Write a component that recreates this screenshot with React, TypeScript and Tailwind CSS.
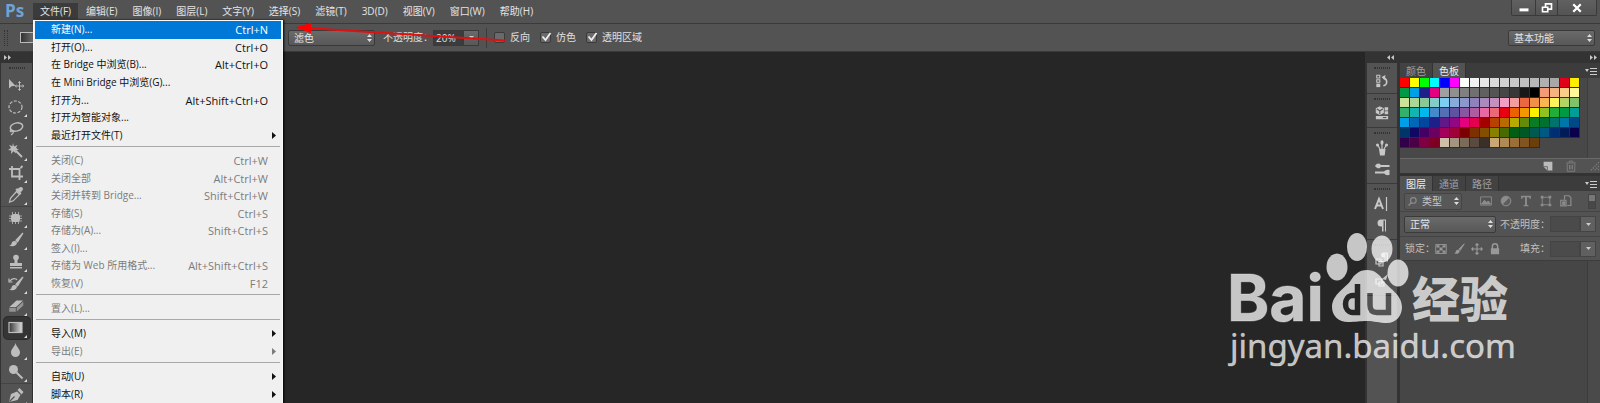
import type { ReactNode } from 'react';

interface MenuEntry {
  label: string;
  keys?: string;
  off?: boolean;
  sub?: boolean;
  active?: boolean;
}

const MENUS = ['文件(F)', '编辑(E)', '图像(I)', '图层(L)', '文字(Y)', '选择(S)', '滤镜(T)', '3D(D)', '视图(V)', '窗口(W)', '帮助(H)'];

const GROUP_OPEN: MenuEntry[] = [
  { label: '新建(N)...', keys: 'Ctrl+N', active: true },
  { label: '打开(O)...', keys: 'Ctrl+O' },
  { label: '在 Bridge 中浏览(B)...', keys: 'Alt+Ctrl+O' },
  { label: '在 Mini Bridge 中浏览(G)...' },
  { label: '打开为...', keys: 'Alt+Shift+Ctrl+O' },
  { label: '打开为智能对象...' },
  { label: '最近打开文件(T)', sub: true },
];

const GROUP_SAVE: MenuEntry[] = [
  { label: '关闭(C)', keys: 'Ctrl+W', off: true },
  { label: '关闭全部', keys: 'Alt+Ctrl+W', off: true },
  { label: '关闭并转到 Bridge...', keys: 'Shift+Ctrl+W', off: true },
  { label: '存储(S)', keys: 'Ctrl+S', off: true },
  { label: '存储为(A)...', keys: 'Shift+Ctrl+S', off: true },
  { label: '签入(I)...', off: true },
  { label: '存储为 Web 所用格式...', keys: 'Alt+Shift+Ctrl+S', off: true },
  { label: '恢复(V)', keys: 'F12', off: true },
];

const GROUP_PLACE: MenuEntry[] = [{ label: '置入(L)...', off: true }];

const GROUP_IMPORT: MenuEntry[] = [
  { label: '导入(M)', sub: true },
  { label: '导出(E)', sub: true, off: true },
];

const GROUP_AUTO: MenuEntry[] = [
  { label: '自动(U)', sub: true },
  { label: '脚本(R)', sub: true },
];

const SWATCHES = [
  '#ff0000 #ffff00 #00ff00 #00ffff #0000ff #ff00ff #ffffff #f2f2f2 #e6e6e6 #dadada #d0d0d0 #c8c8c8 #c0c0c0 #b8b8b8 #b0b0b0 #a8a8a8 #e1001a #ffee00',
  '#009944 #00a0e9 #1d2088 #e4007f #a0a0a0 #909090 #808080 #707070 #606060 #545454 #464646 #383838 #181818 #000000 #f29b76 #f6b37f #facd89 #fff799',
  '#cce198 #acd598 #89c997 #84ccc9 #7ecef4 #88abda #8c97cb #8f82bc #aa89bd #c490bf #f19ec2 #f29c9f #eb6841 #f19149 #f8b551 #fff45c #b3d465 #80c269',
  '#32b16c #13b5b1 #00b7ee #448aca #556fb5 #5f52a0 #8957a1 #ae5da1 #ea68a2 #eb6877 #e60012 #eb6100 #f39800 #fff100 #8fc31f #22ac38 #009944 #009e96',
  '#00a0e9 #0068b7 #00479d #1d2088 #601986 #920783 #e4007f #e5004f #a40000 #b84100 #b86b00 #b7aa00 #638c0b #097c25 #007130 #00736d #0075a9 #004986',
  '#003567 #100964 #440062 #6a005f #a4005b #a0003a #7d0000 #7d3000 #834e00 #8a8000 #486a00 #005e15 #005826 #005a52 #005982 #002e73 #001c58 #0a004c',
  '#32004b #4b0046 #7e0043 #7d0022 #cfbfa8 #a59480 #7d6b5a #5a4a40 #3a302a #c9a876 #b08a55 #9b7038 #825520 #6b3e0c',
].map((row) => row.split(' '));

const text = "font-['Open_Sans','Noto_Sans_CJK_SC',sans-serif]";
const well = 'border border-[#3a3a3a] bg-gradient-to-b from-[#6a6a6a] to-[#585858] text-[#e6e6e6]';

function Icon({ children, size = 'size-4' }: { children: ReactNode; size?: string }) {
  return (
    <svg viewBox="0 0 16 16" className={`${size} shrink-0`} fill="none" stroke="currentColor" strokeWidth="1.2" aria-hidden="true">
      {children}
    </svg>
  );
}

function Brush() {
  return (
    <>
      <path d="M15 1 8 8.2l1.6 1.6z" fill="currentColor" />
      <path d="M8.400 9.500C6 8 3.800 9.500 3.600 11.500 3.300 13 2 13.500 1 13.600c3 1.400 8 .6 7.900-3.100z" fill="currentColor" stroke="none" />
    </>
  );
}

const TOOLS: { name: string; art: ReactNode; gap?: boolean; plain?: boolean; on?: boolean }[] = [
  {
    name: '移动工具', plain: true,
    art: <><path d="M1 2v9.500l2.500-2.300 4-.5z" fill="currentColor" stroke="none" /><path d="M11.500 5v8M7.500 9h8M10.300 6l1.200-1.500L12.700 6M10.300 12l1.200 1.500 1.200-1.500M8.500 7.800 7.200 9l1.300 1.200M14.500 7.800 15.800 9l-1.300 1.200" strokeWidth="1" /></>,
  },
  { name: '椭圆选框工具', art: <ellipse cx="7.500" cy="8" rx="6.500" ry="6" strokeDasharray="3 1.500" /> },
  { name: '套索工具', art: <><ellipse cx="8.500" cy="6" rx="6.300" ry="4" transform="rotate(-14 8.500 6)" strokeWidth="1.500" /><path d="M3.500 8.500c-2 .5-1.500 3 .5 2s2 1.500-1 3.500" /></> },
  { name: '魔棒工具', art: <><path d="m5 0 1 3.500L9.500 2 8 5l3 1.500L7.600 7.300 8 10.500 5.500 8.300 3 11l.3-3.500L0 7l3-2L1 1.800l3.300 1.400z" fill="currentColor" stroke="none" /><path d="m7.500 7.500 6.500 6.500" strokeWidth="2" /></> },
  { name: '裁剪工具', art: <path d="M4 1v10.500h11M1 4h10.500v11M12.500 3l2-2" strokeWidth="1.800" /> },
  { name: '吸管工具', art: <><path d="m10 1.500 2-1.300c2-.8 3.500 1 2.800 2.800l-2.300 2.500 1 1-1.200 1.200-5-5 1.200-1.200z" fill="currentColor" stroke="none" /><path d="m8.500 4.500 3 3-6.300 6.300-3.700 1.300 1-3.800z" /></> },
  { name: '修补工具', gap: true, art: <><rect x="3" y="4" width="9" height="8" rx="3" fill="currentColor" stroke="none" /><path d="M4.500 2v12M7.500 2v12M10.500 2v12M1 6h13M1 8.500h13M1 11h13" strokeWidth="1" strokeOpacity=".8" /></> },
  { name: '画笔工具', art: <Brush /> },
  { name: '仿制图章工具', art: <><circle cx="8" cy="3.500" r="2.800" fill="currentColor" stroke="none" /><path d="M6.500 5h3v4H14v3H2V9h4.500zM2 13h12v1.500H2z" fill="currentColor" stroke="none" /></> },
  { name: '历史记录画笔工具', art: <><Brush /><path d="M1 2.500v3.500h3.500M2 5c2-3 6-3 7-1" /></> },
  { name: '橡皮擦工具', art: <><path d="M8.500 2.500H15L8 9H1.500z" fill="currentColor" stroke="none" /><path d="M1.200 9.800h6.600v4H1.200zM8.800 9.400 15.300 3.500v4l-6.500 6z" fill="currentColor" fillOpacity=".6" stroke="none" /></> },
  {
    name: '渐变工具', on: true,
    art: <><defs><linearGradient id="tool-ramp"><stop stopColor="#333" /><stop offset="1" stopColor="#ddd" /></linearGradient></defs><rect x="1" y="2.500" width="13" height="10" fill="url(#tool-ramp)" /></>,
  },
  { name: '模糊工具', art: <path d="M7.500 1C6.500 5 3 7 3 10.500a4.500 4.500 0 0 0 9 0C12 7 8.500 5 7.500 1z" fill="currentColor" stroke="none" /> },
  { name: '减淡工具', art: <><circle cx="5.500" cy="5.500" r="4.500" fill="currentColor" stroke="none" /><path d="m8.500 8.500 6 6" strokeWidth="2" /></> },
  { name: '钢笔工具', gap: true, art: <><path d="M1 15 3 7l6-2.500L12.500 8 9.500 13z" fill="currentColor" stroke="none" /><path d="m9.500 3 2-2L15.500 5l-2 2.500z" fill="currentColor" stroke="none" /><path d="m1.500 14.500 5-5" stroke="#535353" /></> },
];

function ToolBar() {
  return (
    <aside className="w-[33px] shrink-0 border-x border-[#333] bg-[#535353] text-[#bdbdbd]">
      <div className="flex h-[11px] items-center bg-[#333] pl-[3px]">
        <Arrows />
      </div>
      <Grip />
      <div className="flex flex-col items-center pt-[5px]">
        {TOOLS.map((t) => (
          <div key={t.name} className={t.gap ? 'w-full border-t border-[#444]' : 'w-full'}>
            <button
              aria-label={t.name}
              className={`relative mx-auto flex h-[22px] w-[26px] items-center justify-center rounded-sm pr-[2px] ${t.on ? 'bg-[#353535] ring-1 ring-[#2b2b2b]' : ''}`}
            >
              <Icon>{t.art}</Icon>
              {!t.plain && (
                <svg viewBox="0 0 3 3" className="absolute right-[3px] bottom-px size-[3px]" fill="#ddd" aria-hidden="true">
                  <path d="M3 0v3H0z" />
                </svg>
              )}
            </button>
          </div>
        ))}
      </div>
    </aside>
  );
}

function Arrows({ left = false }: { left?: boolean }) {
  return (
    <svg viewBox="0 0 7 5" className="h-[5px] w-[7px]" fill="#c8c8c8" aria-hidden="true">
      {left ? <path d="M3 0v5L0 2.500zM7 0v5L4 2.500z" /> : <path d="M0 0v5l3-2.500zM4 0v5l3-2.500z" />}
    </svg>
  );
}

function Grip() {
  return <div className="mx-auto mt-1 h-[2px] w-4 border-y border-dotted border-[#333]" />;
}

function Updown() {
  return (
    <svg viewBox="0 0 5 8" className="pointer-events-none absolute top-1/2 right-[3px] h-2 w-[5px] -translate-y-1/2" fill="#ddd" aria-hidden="true">
      <path d="M0 3 2.500 0 5 3zM0 5h5L2.500 8z" />
    </svg>
  );
}

function Picker({ label, value, className }: { label: string; value: string; className: string }) {
  return (
    <span className={`relative flex ${className}`}>
      <select aria-label={label} className={`h-full w-full appearance-none rounded-xs pl-[5px] text-[10px] ${well}`}>
        <option>{value}</option>
      </select>
      <Updown />
    </span>
  );
}

function MenuBar() {
  return (
    <header className="flex h-6 items-start border-b border-[#3a3a3a] bg-[#535353]">
      <div className="w-[33px] pl-[5px] text-[17px] leading-[21px] font-bold text-[#6fa3d3]">Ps</div>
      <nav className="flex gap-px">
        {MENUS.map((m, i) => (
          <button key={m} className={`mt-[3px] h-4 px-[7px] text-[10px] leading-4 text-[#e4e4e4] ${i === 0 ? 'bg-[#3b3b3b]' : ''}`}>
            {m}
          </button>
        ))}
      </nav>
      <div className="mr-[3px] ml-auto flex h-4 divide-x divide-[#3a3a3a] rounded-b-xs border border-t-0 border-[#3a3a3a] bg-gradient-to-b from-[#606060] to-[#545454] text-white">
        <button aria-label="最小化" className="flex w-6 items-center justify-center">
          <Icon size="size-3"><path d="M2 10.500h12" strokeWidth="4" /></Icon>
        </button>
        <button aria-label="还原" className="flex w-[22px] items-center justify-center">
          <Icon size="size-3"><path d="M2 7h7v6H2zM6 6V2.500h8v7h-4" strokeWidth="2.200" /></Icon>
        </button>
        <button aria-label="关闭" className="flex w-[38px] items-center justify-center">
          <Icon size="size-3"><path d="m3 3 10 10M13 3 3 13" strokeWidth="3" /></Icon>
        </button>
      </div>
    </header>
  );
}

function Tick({ label, checked = false }: { label: string; checked?: boolean }) {
  return (
    <label className="flex items-center gap-[5px]">
      <span className="relative flex">
        <input type="checkbox" defaultChecked={checked} className="peer size-[11px] appearance-none rounded-xs border border-[#3a3a3a] bg-[#6a6a6a]" />
        <svg viewBox="0 0 12 12" className="pointer-events-none absolute -top-px left-0 hidden size-3 peer-checked:block" fill="none" stroke="#eee" strokeWidth="1.800" aria-hidden="true">
          <path d="m2.500 5.500 3 3.500L10.500 2" />
        </svg>
      </span>
      {label}
    </label>
  );
}

function OptionsBar() {
  return (
    <div className="flex h-[28px] items-center border-b border-[#3a3a3a] bg-[#535353] text-[10px] text-[#e0e0e0]">
      <div className="ml-1 h-4 w-1 border-x border-dotted border-[#333]" />
      <div className="ml-3 h-[11px] w-[260px] shrink-0">
        <div className="h-full w-10 border border-[#bbb] bg-gradient-to-r from-[#333] to-white" />
      </div>
      <Picker label="模式" value="滤色" className="ml-2 h-4 w-[87px]" />
      <label htmlFor="opacity" className="ml-2">不透明度：</label>
      <input id="opacity" defaultValue="20%" className="h-4 w-[30px] border border-[#3a3a3a] bg-[#3c3c3c] pl-[2px]" />
      <button aria-label="调整不透明度" className={`flex h-4 w-4 items-center justify-center ${well}`}>
        <Drop />
      </button>
      <div className="mx-[7px] h-5 w-px bg-[#3c3c3c]" />
      <div className="flex gap-[10px]">
        <Tick label="反向" />
        <Tick label="仿色" checked />
        <Tick label="透明区域" checked />
      </div>
      <Picker label="工作区" value="基本功能" className="mr-[5px] ml-auto h-4 w-[87px]" />
    </div>
  );
}

function Drop() {
  return (
    <svg viewBox="0 0 5 3" className="h-[3px] w-[5px]" fill="#ccc" aria-hidden="true">
      <path d="M0 0h5L2.500 3z" />
    </svg>
  );
}

function MenuGroup({ items, className }: { items: MenuEntry[]; className: string }) {
  return (
    <div className={`grid auto-rows-fr ${className}`}>
      {items.map((it) => (
        <button
          key={it.label}
          role="menuitem"
          className={`flex items-center justify-between pr-[13px] pl-4 text-left text-[10px] leading-[17px] ${
            it.active ? 'bg-[#0078d7] text-white' : it.off ? 'text-[#7c7c7c]' : 'text-[#111]'
          }`}
        >
          <span>{it.label}</span>
          {it.keys && <span className="text-[11px]">{it.keys}</span>}
          {it.sub && (
            <svg viewBox="0 0 4 7" className="-mr-2 h-[7px] w-1" fill="currentColor" aria-hidden="true">
              <path d="M0 0v7l4-3.500z" />
            </svg>
          )}
        </button>
      ))}
    </div>
  );
}

function FileMenu() {
  const rule = <hr className="mx-px border-[#a8a8a8]" />;
  return (
    <div role="menu" className="absolute top-5 left-[33px] z-10 w-[250px] border border-[#f8f8f8] bg-[#f0f0f0] px-px shadow-[1px_0_2px_#000]">
      <MenuGroup items={GROUP_OPEN} className="h-[123px]" />
      <div className="pt-[2px] pb-[5px]">{rule}</div>
      <MenuGroup items={GROUP_SAVE} className="h-[140px]" />
      <div className="pt-[2px] pb-1">{rule}</div>
      <MenuGroup items={GROUP_PLACE} className="h-[18px]" />
      <div className="pt-[2px] pb-[5px]">{rule}</div>
      <MenuGroup items={GROUP_IMPORT} className="h-[35px]" />
      <div className="pt-[2px] pb-[5px]">{rule}</div>
      <MenuGroup items={GROUP_AUTO} className="h-[35px]" />
    </div>
  );
}

function Dock() {
  return (
    <div className="flex w-[30px] shrink-0 flex-col bg-[#535353] text-[#c8c8c8]">
      <div className="flex h-[11px] items-center justify-end bg-[#333] pr-[3px]">
        <Arrows left />
      </div>
      <DockGroup className="h-8">
        <Icon size="size-[14px]"><path d="M2 1.500h3.500v3H2zM2 6.500h3.500v3H2z" /><path d="M1.500 11h4.500v4H1.500z" fill="currentColor" stroke="none" /><path d="M9.500 13.500c5-1 5-7 1-9" strokeWidth="1.800" /><path d="M12 1 7.500 3.500 11 7z" fill="currentColor" stroke="none" /></Icon>
      </DockGroup>
      <DockGroup className="h-[35px]">
        <Icon size="size-[14px]"><path d="m5.500 1 4 2v4.500l-4 2-4-2V3z" fill="currentColor" /><path d="m2 3.500 3.500 2 3.500-2M5.500 5.500v4" stroke="#535353" /><path d="M11 1.500h4v3.500h-4zM11 6h4v3.500h-4zM1 11.500h14V15H1z" fill="currentColor" stroke="none" /><path d="M9 13.200h4" stroke="#535353" /></Icon>
      </DockGroup>
      <DockGroup className="h-[58px]">
        <Icon><path d="M5 9h6.500l-.8 6.500H6z" fill="currentColor" stroke="none" /><path d="M8 9V3M6 9 3 4M10 9l3-5" strokeWidth="1.200" /><ellipse cx="8" cy="2.500" rx="1.500" ry="2.200" fill="currentColor" stroke="none" /><circle cx="3.500" cy="5" r="1.500" fill="currentColor" stroke="none" /><circle cx="12.500" cy="5" r="1.500" fill="currentColor" stroke="none" /></Icon>
        <Icon><path d="M6 5h9.500M1 11.500h9" strokeWidth="1.800" /><path d="M1 5c2-3 4-3 5.500-1.500v3C5 8 3 7.500 1 5zM15.500 14c-3 .5-5-.5-6-2.500 1-2 3-3 6-2.500z" fill="currentColor" stroke="none" /></Icon>
      </DockGroup>
      <DockGroup className="h-[57px]">
        <Icon><path d="m1 13 4-10 4 10M2.500 9.500h5" strokeWidth="2" /><path d="M12.500 1v14" /></Icon>
        <Icon><path d="M12 2.500H7a3.500 3.500 0 0 0 0 7h1v5h1.500v-11h1.500v11h1z" fill="currentColor" stroke="none" /></Icon>
      </DockGroup>
      <DockGroup className="h-[58px]">
        <Icon><path d="M14 1.500H9.500a2.500 2.500 0 0 0 0 5h1v4h1v-8h1v8H14z" fill="currentColor" stroke="none" /><path d="M2 8h5v5H2zM5 10.500h4V15H5z" /></Icon>
        <Icon><path d="m8 6 6-5-2 6z" fill="currentColor" stroke="none" /><path d="M2 6h6v5H2zM5 9h5v4H5z" /></Icon>
      </DockGroup>
      <div className="h-[110px]" />
    </div>
  );
}

function DockGroup({ children, className }: { children: ReactNode; className: string }) {
  return (
    <div className={`flex flex-col items-center border-b border-[#3a3a3a] ${className}`}>
      <Grip />
      <div className="flex flex-1 flex-col items-center justify-evenly">{children}</div>
    </div>
  );
}

function Tabs({ names, active }: { names: string[]; active: number }) {
  return (
    <div role="tablist" className="flex h-[15px] bg-[#3c3c3c] text-[10px] leading-[14px]">
      {names.map((n, i) => (
        <button key={n} role="tab" aria-selected={i === active} className={`border-r border-[#333] px-[6px] ${i === active ? 'bg-[#535353] text-[#eee]' : 'bg-[#424242] text-[#a0a0a0]'}`}>
          {n}
        </button>
      ))}
      <button aria-label="面板菜单" className="mr-[3px] ml-auto text-[#ccc]">
        <svg viewBox="0 0 12 8" className="h-2 w-3" fill="none" stroke="currentColor" aria-hidden="true">
          <path d="M5 1.500h7M5 4.500h7M5 7.500h7" />
          <path d="M0 2h4L2 5z" fill="currentColor" stroke="none" />
        </svg>
      </button>
    </div>
  );
}

function SwatchPanel() {
  return (
    <section>
      <Tabs names={['颜色', '色板']} active={1} />
      <div className="flex h-20 bg-[#484848]">
        <div className="flex-1">
          {SWATCHES.map((row, y) => (
            <div key={y} className="flex">
              {row.map((c, x) => (
                <div key={x} className="size-[10px] border-r border-b border-[#2c2c2c]" style={{ background: c }} />
              ))}
            </div>
          ))}
        </div>
        <div className="w-[13px] border-l border-[#3e3e3e] bg-[#4c4c4c]" />
      </div>
      <div className="flex h-[15px] items-center justify-end gap-3 border-t border-[#6a6a6a] bg-[#535353] pr-px text-[#bbb]">
        <Icon size="size-[10px]"><path d="M1 1h14v14H7L1 9z" fill="currentColor" stroke="none" /><path d="M1 9h6v6" stroke="#535353" /></Icon>
        <span className="text-[#808080]"><Icon size="size-3"><path d="M1.500 4h13M5.500 3.500V1.500h5v2M3 5v10h10V5M6 6.500v6M8 6.500v6M10 6.500v6" /></Icon></span>
        <span className="text-[#808080]"><Icon size="size-[10px]"><path d="M16 2 2 16M16 8l-8 8M16 13l-3 3" strokeDasharray="2 2" strokeWidth="2" /></Icon></span>
      </div>
    </section>
  );
}

function Amount({ label }: { label: string }) {
  return (
    <div className="ml-auto flex items-center">
      <label htmlFor={label}>{label}：</label>
      <input id={label} className="h-4 w-[30px] border border-[#444] bg-[#4b4b4b]" />
      <button aria-label={`调整${label}`} className="flex h-4 w-4 items-center justify-center border border-[#444] bg-[#606060]">
        <Drop />
      </button>
    </div>
  );
}

function LayerPanel() {
  return (
    <section className="flex flex-1 flex-col border-t-3 border-[#333]">
      <Tabs names={['图层', '通道', '路径']} active={0} />
      <div className="bg-[#535353] text-[10px] text-[#c0c0c0]">
        <div className="flex h-[21px] items-center border-b border-[#444] px-1 text-[#8c8c8c]">
          <span className="relative flex h-[17px] w-[58px]">
            <select aria-label="类型" className="h-full w-full appearance-none rounded-xs border border-[#444] bg-[#585858] pl-[17px] text-[10px] text-[#c8c8c8]">
              <option>类型</option>
            </select>
            <span className="pointer-events-none absolute top-1 left-1">
              <Icon size="size-[9px]"><circle cx="9.500" cy="6" r="5" strokeWidth="2" /><path d="m6 10-5 5" strokeWidth="2.500" /></Icon>
            </span>
            <Updown />
          </span>
          <div className="ml-[18px] flex gap-2">
            <Icon size="size-3"><path d="M.8 2.500h14.400v11H.8z" /><path d="m2 12 4-5 3 3 2-2 3 4z" fill="currentColor" /></Icon>
            <Icon size="size-3"><circle cx="8" cy="8" r="6.500" fill="currentColor" /><path d="M12 4a5.500 5.500 0 0 1-8 8z" fill="#5c5c5c" stroke="none" /></Icon>
            <Icon size="size-3"><path d="M1.500 1h13v4H13L12 3H9.300v10l2 .8V15H4.700v-1.200l2-.8V3H4L3 5H1.500z" fill="currentColor" stroke="none" /></Icon>
            <Icon size="size-3"><path d="M3 3h10v10H3z" /><path d="M1 1h3.500v3.500H1zM11.500 1H15v3.500h-3.500zM1 11.500h3.500V15H1zM11.500 11.500H15V15h-3.500z" fill="currentColor" stroke="none" /></Icon>
            <Icon size="size-3"><path d="M6 6V1h6l2.500 2.500V14H9.500M1 7h7v7.500H1z" strokeWidth="1.600" /><path d="M3.500 9h3v4h-3z" fill="currentColor" /></Icon>
          </div>
          <div className="ml-auto h-[15px] w-2 border border-[#444] bg-[#484848]">
            <div className="h-[6px] bg-[#777]" />
          </div>
        </div>
        <div className="flex h-[25px] items-center border-b border-[#444] px-1">
          <Picker label="混合模式" value="正常" className="h-[17px] w-[92px]" />
          <Amount label="不透明度" />
        </div>
        <div className="flex h-6 items-center border-b border-[#3c3c3c] pr-1 pl-[5px]">
          <span>锁定：</span>
          <div className="flex gap-[6px] text-[#999]">
            <Icon size="size-3"><path d="M1 2h14v12H1z" /><path d="M2 3h4v3H2zM10 3h4v3h-4zM6 6h4v4H6zM2 10h4v3H2zM10 10h4v3h-4z" fill="currentColor" stroke="none" /></Icon>
            <Icon size="size-3"><Brush /></Icon>
            <Icon size="size-3"><path d="M8 1v14M1 8h14M6 3l2-2 2 2M6 13l2 2 2-2M3 6 1 8l2 2M13 6l2 2-2 2" strokeWidth="1.500" /></Icon>
            <Icon size="size-3"><path d="M2.500 7h11v8h-11z" fill="currentColor" stroke="none" /><path d="M4.500 8V4.500a3.500 3.500 0 0 1 7 0V8" strokeWidth="2" /></Icon>
          </div>
          <Amount label="填充" />
        </div>
      </div>
      <div className="flex flex-1 justify-end bg-[#464646]">
        <div className="w-[13px] border-l border-[#3c3c3c] bg-[#4a4a4a]" />
      </div>
    </section>
  );
}

function Watermark() {
  return (
    <svg viewBox="0 0 300 170" className="pointer-events-none absolute right-20 bottom-2 w-[300px]" fill="#fff" fillOpacity=".74" role="img" aria-label="Baidu 经验">
      <mask id="paw-letters">
        <rect width="300" height="170" fill="#fff" fillOpacity="1" />
        <path d="M137.500 59v28.500H133c-10 0-10-17 0-17h4.500M150 68v12c0 5 2 7.500 7 7.500h11.500V68" fill="none" stroke="#000" strokeWidth="5.500" />
      </mask>
      <text x="7" y="96" fontFamily="Inter, sans-serif" fontWeight="700" fontSize="64" stroke="#fff" strokeOpacity=".3">Bai</text>
      <ellipse cx="117" cy="42" rx="10.500" ry="13.500" />
      <ellipse cx="137" cy="22" rx="10" ry="14" />
      <ellipse cx="162" cy="24" rx="10.500" ry="13.500" />
      <ellipse cx="178" cy="48" rx="10.500" ry="13.500" />
      <path
        mask="url(#paw-letters)"
        d="M147 45c-8 0-13 5-16 10-4 7-19 14-19 27 0 9 7 15 16 15 8 0 12-1 19-1s12 2 20 2c9 0 15-7 15-16 0-13-14-19-19-27-3-5-8-10-16-10z"
      />
      <text x="192" y="92" fontFamily="Noto Sans CJK SC, sans-serif" fontWeight="900" fontSize="48">经验</text>
      <text x="10" y="133" fontFamily="Noto Sans, sans-serif" fontSize="33" stroke="#fff" strokeOpacity=".4" strokeWidth=".7">jingyan.baidu.com</text>
    </svg>
  );
}

export default function App() {
  return (
    <div className={`relative flex h-screen flex-col overflow-hidden bg-[#262626] ${text}`}>
      <MenuBar />
      <OptionsBar />
      <div className="flex min-h-0 flex-1">
        <ToolBar />
        <main className="flex-1 bg-[#262626]" />
        <div className="flex shrink-0 border-l-2 border-[#333]">
          <Dock />
          <aside className="flex w-[203px] flex-col border-l-3 border-[#333]">
            <div className="flex h-[11px] items-center justify-end bg-[#333] pr-[3px]">
              <Arrows />
            </div>
            <SwatchPanel />
            <LayerPanel />
          </aside>
        </div>
      </div>
      <FileMenu />
      <svg viewBox="0 0 212 24" className="pointer-events-none absolute top-5 left-[294px] z-20 h-6 w-[212px]" aria-hidden="true">
        <path d="M12 8 211 20.500" stroke="#e01010" strokeWidth="2" />
        <path d="M1 7.500 17 3v10z" fill="#f00" />
      </svg>
      <Watermark />
    </div>
  );
}
